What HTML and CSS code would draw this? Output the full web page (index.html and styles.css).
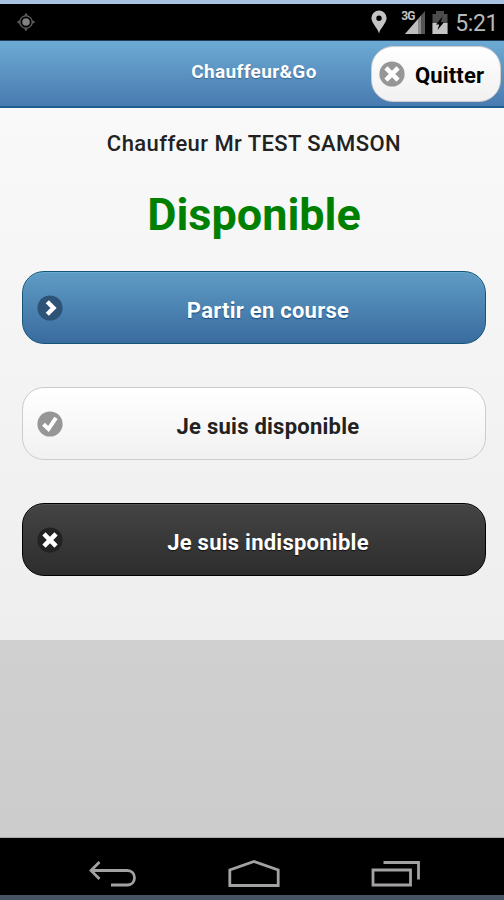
FILE: index.html
```html
<!DOCTYPE html>
<html lang="fr">
<head>
  <meta charset="utf-8">
  <title>Chauffeur&amp;Go</title>
  <link rel="stylesheet" href="styles.css">
</head>
<body>
  <div class="statusbar">
    <svg class="gps" width="20" height="20" viewBox="0 0 20 20">
      <circle cx="10" cy="10" r="6.2" fill="none" stroke="#606060" stroke-width="1.3"/>
      <circle cx="10" cy="10" r="3.8" fill="#828282"/>
      <path d="M10 .8l2 3H8zM10 19.2l2-3H8zM.8 10l3-2v4zM19.2 10l-3-2v4z" fill="#606060"/>
    </svg>
    <div class="status-icons">
      <svg width="18" height="26" viewBox="0 0 18 26">
        <path fill-rule="evenodd" d="M9 1.5a7.6 7.6 0 0 1 7.6 7.6C16.6 14 10.5 19 9 24.500 7.500 19 1.400 14 1.400 9.100A7.600 7.600 0 0 1 9 1.500zM9 6.500a2.700 2.700 0 1 0 0 5.400 2.700 2.700 0 0 0 0-5.400z" fill="#c4c4c4"/>
      </svg>
      <div class="signal">
        <span class="network">3G</span>
        <svg width="20" height="23" viewBox="0 0 20 23">
          <path d="M20 0v23H0z" fill="#555"/>
          <path d="M13 8v15H0z" fill="#bebebe"/>
          <path d="M13 8l3-3.400V23h-3z" fill="#8a8a8a"/>
        </svg>
      </div>
      <svg class="battery" width="16" height="23" viewBox="0 0 16 23">
        <path d="M4 0h8v3h3.500v20H.5V3H4z" fill="#4c4c4c"/>
        <path d="M.5 12h15v11H.5z" fill="#c4c4c4"/>
        <path d="M10.500 5.500L4 13.500h3.200L5.500 19l6.500-7.800H8.800z" fill="#000"/>
      </svg>
      <span class="clock">5:21</span>
    </div>
  </div>

  <div class="header">
    <h1>Chauffeur&amp;Go</h1>
    <a href="#" class="quit">
      <svg width="26" height="26" viewBox="0 0 26 26">
        <circle cx="13" cy="13" r="12.600" fill="#969696"/>
        <path d="M8.600 8.600l8.800 8.800M17.400 8.600l-8.800 8.800" stroke="#fff" stroke-width="4.600" stroke-linecap="square"/>
      </svg>
      <span>Quitter</span>
    </a>
  </div>

  <div class="content">
    <p class="driver">Chauffeur Mr TEST SAMSON</p>
    <p class="state">Disponible</p>

    <a href="#" class="btn btn-blue">
      <svg width="26" height="26" viewBox="0 0 26 26">
        <circle cx="13" cy="13" r="12.600" fill="#2d5476"/>
        <path d="M10.300 6.800l6.200 6.200-6.200 6.200" fill="none" stroke="#fff" stroke-width="4.400"/>
      </svg>
      <span>Partir en course</span>
    </a>
    <a href="#" class="btn btn-white">
      <svg width="26" height="26" viewBox="0 0 26 26">
        <circle cx="13" cy="13" r="12.600" fill="#969696"/>
        <path d="M6.500 13.200l5 4.800L19 6.800" fill="none" stroke="#fff" stroke-width="4"/>
      </svg>
      <span>Je suis disponible</span>
    </a>
    <a href="#" class="btn btn-dark">
      <svg width="26" height="26" viewBox="0 0 26 26">
        <circle cx="13" cy="13" r="12.600" fill="#222"/>
        <path d="M8.600 8.600l8.800 8.800M17.400 8.600l-8.800 8.800" stroke="#fff" stroke-width="4.600" stroke-linecap="square"/>
      </svg>
      <span>Je suis indisponible</span>
    </a>
  </div>

  <div class="filler"></div>

  <div class="navbar">
    <svg width="48" height="28" viewBox="0 0 48 28">
      <path d="M10.500 2L2 10.500l8.500 8.500M2.500 10.500H38c10 0 10 14.500 0 14.500H22" fill="none" stroke="#a2a2a2" stroke-width="2.800"/>
    </svg>
    <svg width="52" height="28" viewBox="0 0 52 28">
      <path d="M1.800 25.500V10L26 1.500 50.200 10v15.500z" fill="none" stroke="#a2a2a2" stroke-width="2.800"/>
    </svg>
    <svg width="50" height="28" viewBox="0 0 50 28">
      <path d="M2 10h37.500v15H2zM12.500 2.500H47.500v17" fill="none" stroke="#a2a2a2" stroke-width="2.800"/>
    </svg>
  </div>
</body>
</html>
```

FILE: styles.css
```css
* {
  box-sizing: border-box;
}

body {
  margin: 0;
  height: 900px;
  display: flex;
  flex-direction: column;
  overflow: hidden;
  font-family: Roboto, "Liberation Sans", sans-serif;
  background-color: #000;
}

svg {
  display: block;
  flex: none;
}

a {
  text-decoration: none;
}

.statusbar {
  height: 41px;
  flex: none;
  border-top: 4px solid #a9c3e3;
  border-bottom: 1px solid #213b5b;
  background-color: #000;
  display: flex;
  justify-content: space-between;
  padding: 0 6px 0 16px;
}

.gps {
  margin-top: 8px;
}

.status-icons {
  display: flex;
  padding-top: 5px;
}

.signal {
  display: flex;
  margin-left: 13px;
  padding-top: 2px;
}

.network {
  width: 13px;
  margin-right: -9px;
  margin-top: -1px;
  font-size: 12px;
  line-height: 13px;
  letter-spacing: -1px;
  font-weight: bold;
  color: #c4c4c4;
}

.battery {
  margin: 2px 7px 0 7px;
}

.clock {
  font-size: 23px;
  line-height: 29px;
  letter-spacing: -0.4px;
  color: #b8b8b8;
}

.header {
  height: 67px;
  flex: none;
  display: grid;
  grid-template-columns: 1fr auto 1fr;
  background: linear-gradient(#6caad3, #497bb0);
  border-bottom: 2px solid #1c5f91;
}

.header h1 {
  grid-column: 2;
  margin: 18px 0 0 4px;
  font-size: 19px;
  line-height: 26px;
  letter-spacing: 0.35px;
  color: #fff;
  text-shadow: 0 1px 1px #3e6790;
}

.quit {
  justify-self: end;
  width: 130px;
  height: 56px;
  margin: 5px 3px 0 0;
  padding-left: 7px;
  display: flex;
  align-items: center;
  border: 1px solid #ccc;
  border-radius: 22px;
  background: linear-gradient(#fff, #f1f1f1);
  color: #000;
  font-size: 22px;
  font-weight: bold;
  letter-spacing: 0.15px;
}

.quit span {
  margin: 3px 0 0 10px;
}

.content {
  height: 532px;
  flex: none;
  padding: 22px 18px 0 22px;
  background: linear-gradient(#f9f9f9, #eee);
}

.driver {
  margin: 0;
  font-size: 22px;
  line-height: 28px;
  font-weight: 500;
  letter-spacing: 0.43px;
  text-align: center;
  color: #222;
}

.state {
  margin: 28px 0 27px;
  font-size: 45px;
  line-height: 58px;
  font-weight: bold;
  text-align: center;
  color: green;
}

.btn {
  height: 73px;
  margin-bottom: 43px;
  padding: 0 12px 0 14px;
  display: grid;
  grid-template-columns: 26px 1fr;
  align-items: center;
  border: 1px solid;
  border-radius: 22px;
  font-size: 22px;
  font-weight: bold;
  letter-spacing: 0.25px;
  text-align: center;
}

.btn span {
  padding: 5px 0 0 0;
}

.btn-blue {
  color: #fff;
  border-color: #155678;
  background: linear-gradient(#5f9cc5, #396b9f);
  box-shadow: inset 0 1px 0 #6baad0;
  text-shadow: 0 1px 1px #194b7e;
}

.btn-white {
  color: #222;
  border-color: #ccc;
  background: linear-gradient(#fff, #f1f1f1);
}

.btn-dark {
  color: #fff;
  border-color: #000;
  background: linear-gradient(#444, #2d2d2d);
  box-shadow: inset 0 1px 0 #555;
  text-shadow: 0 1px 1px #111;
}

.filler {
  flex: 1;
  background: linear-gradient(#d0d0d0, #ccc);
  border-bottom: 1px solid #aaa;
}

.navbar {
  height: 62px;
  flex: none;
  display: flex;
  justify-content: space-between;
  padding: 22px 83px 0 89px;
  border-bottom: 5px solid #465363;
  background-color: #000;
}
```
